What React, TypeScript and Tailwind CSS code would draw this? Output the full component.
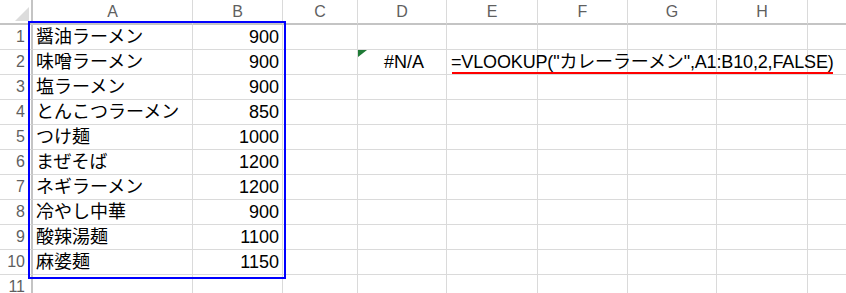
import React from "react";

// the last column is only partly visible, its letter falls outside the window
const columns = ["A", "B", "C", "D", "E", "F", "G", "H", ""];

const menu: [string, number][] = [
  ["醤油ラーメン", 900],
  ["味噌ラーメン", 900],
  ["塩ラーメン", 900],
  ["とんこつラーメン", 850],
  ["つけ麺", 1000],
  ["まぜそば", 1200],
  ["ネギラーメン", 1200],
  ["冷やし中華", 900],
  ["酸辣湯麺", 1100],
  ["麻婆麺", 1150],
];

const cellFont = { fontFamily: '"Liberation Sans", "Noto Sans CJK JP", sans-serif' };

function Cell({ children, className = "" }: { children?: React.ReactNode; className?: string }) {
  return (
    <div
      className={`relative h-[25px] border-r border-b border-[#dadada] flex items-center text-[18px] text-black whitespace-nowrap ${className}`}
    >
      {children}
    </div>
  );
}

export default function App() {
  const rows = Array.from({ length: 11 }, (_, i) => i + 1);

  return (
    <div className="relative w-[846px] h-[293px] overflow-hidden bg-white" style={cellFont}>
      <div className="grid grid-cols-[33px_160px_90px_75px_89px_91px_90px_89px_91px_90px]">
        {/* corner */}
        <div className="relative h-[25px] border-r-2 border-b-2 border-[#c4c4c4]">
          <svg className="absolute left-0 top-0" width="31" height="23">
            <polygon points="15,21 29,21 29,7" fill="#dcdcdc" />
          </svg>
        </div>
        {columns.map((c, i) => (
          <div
            key={i}
            className="h-[25px] border-r border-[#dadada] border-b-2 border-b-[#c4c4c4] flex items-center justify-center text-[16px] text-[#5f5f5f]"
          >
            {c}
          </div>
        ))}

        {rows.map((r) => {
          const item = menu[r - 1];
          return (
            <React.Fragment key={r}>
              <div className="h-[25px] border-r-2 border-r-[#c4c4c4] border-b border-b-[#dadada] flex items-center justify-end pr-[6px] text-[16px] text-[#5f5f5f]">
                {r}
              </div>
              <Cell className="pl-[3px]">{item ? item[0] : null}</Cell>
              <Cell className="justify-end pr-[3px]">{item ? item[1] : null}</Cell>
              <Cell />
              <Cell className="justify-center pl-[4px]">
                {r === 2 && (
                  <>
                    <svg className="absolute left-0 top-0" width="10" height="8">
                      <polygon points="0,0 9,0 0,7" fill="#1f7a36" />
                    </svg>
                    #N/A
                  </>
                )}
              </Cell>
              <Cell className="pl-[4px] overflow-visible z-10">
                {r === 2 && (
                  <span className="tracking-[-0.15px]">=VLOOKUP("カレーラーメン",A1:B10,2,FALSE)</span>
                )}
              </Cell>
              <Cell />
              <Cell />
              <Cell />
              <Cell />
            </React.Fragment>
          );
        })}
      </div>

      {/* selection frame around A1:B10 */}
      <div className="absolute left-[28px] top-[21px] w-[258px] h-[258px] border-2 border-[#0000ff] pointer-events-none" />
      {/* red mark under the formula */}
      <div className="absolute left-[452px] top-[72px] w-[381px] h-[2px] bg-[#ff0000] z-20" />
    </div>
  );
}
